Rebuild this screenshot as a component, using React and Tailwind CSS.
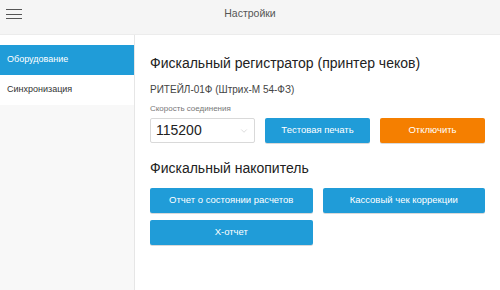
import { ChevronDown } from "lucide-react";

const menuItems = [
  { label: "Оборудование", active: true },
  { label: "Синхронизация", active: false },
];

const Btn = ({ children, color = "blue" }) => (
  <button
    className={`h-[25px] rounded-[2px] text-[9.5px] text-white shadow-[0_1px_0_rgba(0,0,0,0.15)] ${
      color === "orange" ? "bg-[#f57f00]" : "bg-[#209cd8]"
    }`}
  >
    {children}
  </button>
);

const App = () => {
  return (
    <div className="w-[500px] h-[290px] flex flex-col bg-white overflow-hidden font-['Liberation_Sans',Arial,sans-serif]">
      <header className="h-[35px] shrink-0 bg-[#f5f5f5] border-b border-[#ececec] flex items-center relative">
        <div className="absolute left-[6px] top-[9px] flex flex-col gap-[3.5px]">
          <span className="block w-[16px] h-[1px] bg-[#555]" />
          <span className="block w-[16px] h-[1px] bg-[#555]" />
          <span className="block w-[16px] h-[1px] bg-[#555]" />
        </div>
        <div className="w-full text-center text-[10.5px] text-[#555] -mt-[6px]">
          Настройки
        </div>
      </header>
      <div className="flex flex-1">
        <aside className="w-[135px] shrink-0 bg-[#f8f8f8] border-r border-[#e6e6e6] flex flex-col">
          <div className="h-[10px] bg-white" />
          {menuItems.map((item) => (
            <div
              key={item.label}
              className={`h-[30px] flex items-center pl-[7px] text-[9px] ${
                item.active ? "bg-[#209cd8] text-white" : "bg-white text-[#333]"
              }`}
            >
              {item.label}
            </div>
          ))}
        </aside>
        <main className="flex-1 pl-[15px] pr-[15px] pt-[18px] text-[#222]">
          <h2 className="text-[14px] leading-[20px]">
            Фискальный регистратор (принтер чеков)
          </h2>
          <div className="mt-[10px] text-[10px] leading-[14px] text-[#444]">
            РИТЕЙЛ-01Ф (Штрих-М 54-ФЗ)
          </div>
          <div className="mt-[6px] text-[8px] leading-[12px] text-[#777]">
            Скорость соединения
          </div>
          <div className="mt-[3px] grid grid-cols-3 gap-[10px]">
            <div className="h-[25px] border border-[#d9d9d9] rounded-[2px] flex items-center justify-between pl-[5px] pr-[5px]">
              <span className="text-[14px] text-[#222]">115200</span>
              <ChevronDown size={10} strokeWidth={1} color="#aaa" />
            </div>
            <Btn>Тестовая печать</Btn>
            <Btn color="orange">Отключить</Btn>
          </div>
          <h2 className="mt-[15px] text-[14px] leading-[20px]">
            Фискальный накопитель
          </h2>
          <div className="mt-[10px] grid grid-cols-2 gap-x-[10px] gap-y-[7px]">
            <Btn>Отчет о состоянии расчетов</Btn>
            <Btn>Кассовый чек коррекции</Btn>
            <Btn>X-отчет</Btn>
          </div>
        </main>
      </div>
    </div>
  );
};

export default App;
